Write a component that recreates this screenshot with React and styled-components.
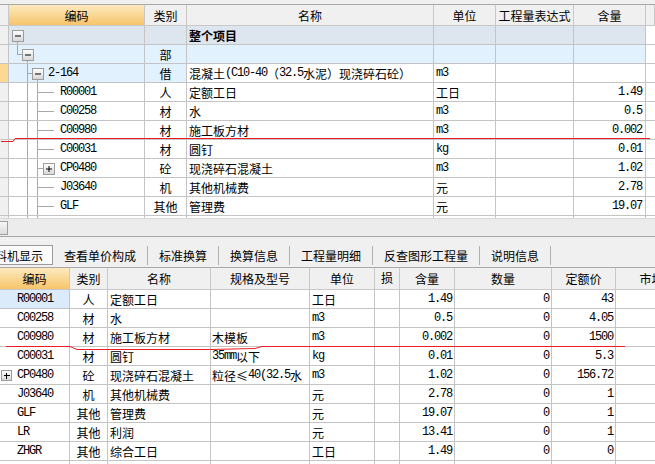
import React from 'react';
import styled, { createGlobalStyle } from 'styled-components';

const GlobalStyle = createGlobalStyle`
  html, body { margin: 0; padding: 0; background: #f0f0f0; }
  body {
    font-family: "Noto Sans CJK SC", "Liberation Sans", sans-serif;
    font-size: 12px;
    color: #000;
  }
`;

const LINE = '#c4c4c4';

const Page = styled.div`
  position: relative;
  width: 655px;
  height: 464px;
  overflow: hidden;
  background: #f0f0f0;
  display: flex;
  flex-direction: column;
`;

const TopGap = styled.div`
  height: 4px;
  flex: none;
`;

const Grid = styled.div`
  flex: none;
  overflow: hidden;
  border-top: ${p => (p.$top ? '1px solid #a8a8a8' : 'none')};
  background: #fff;
`;

const Body = styled.div`
  height: ${p => p.$h}px;
  overflow: hidden;
`;

const Row = styled.div`
  display: grid;
  grid-template-columns: ${p => p.$cols};
  height: ${p => p.$h || 19}px;
  background: ${p => p.$bg || '#fff'};
`;

const Cell = styled.div`
  box-sizing: border-box;
  height: 100%;
  border-right: ${p => (p.$noRight ? 'none' : `1px solid ${LINE}`)};
  border-bottom: 1px solid ${LINE};
  display: flex;
  align-items: center;
  overflow: hidden;
  white-space: nowrap;
  justify-content: ${p =>
    p.$align === 'right' ? 'flex-end' : p.$align === 'center' ? 'center' : 'flex-start'};
  padding: 0 ${p => p.$pr ?? 2}px 0 ${p => p.$pl ?? 2}px;
  background: ${p => p.$bg || 'transparent'};
  font-weight: ${p => (p.$bold ? 700 : 400)};
  position: relative;
`;

const HeadCell = styled(Cell)`
  justify-content: center;
  align-items: ${p => (p.$top ? 'flex-start' : 'center')};
  padding: ${p => (p.$top ? '1px 0 0' : '0')};
  background: ${p =>
    p.$hot ? 'linear-gradient(#fde9bf, #f6c56a)' : p.$bg || '#f0f0f0'};
  border-right: 1px solid #c8c8c8;
  border-bottom: 1px solid #c8c8c8;
`;

const Half = styled.span`
  font-family: "Liberation Mono", monospace;
  font-size: 12px;
  letter-spacing: -1.2px;
`;

const Txt = ({ children }) => {
  if (children == null || children === '') return null;
  const parts = String(children).split(/([\x20-\x7e]+)/).filter(Boolean);
  return (
    <>
      {parts.map((s, i) =>
        /^[\x20-\x7e]+$/.test(s) ? <Half key={i}>{s}</Half> : <span key={i}>{s}</span>
      )}
    </>
  );
};

const HScroll = styled.div`
  flex: none;
  box-sizing: border-box;
  height: 19px;
  border-top: 1px solid #d8d8d8;
  border-bottom: 1px solid #a4a4a4;
  background: #ececec;
  display: flex;
  align-items: center;
`;

const Thumb = styled.div`
  width: 8px;
  height: 14px;
  box-sizing: border-box;
  border: 1px solid #a0a0a0;
  border-left: none;
  background: linear-gradient(#f6f6f6, #dcdcdc);
`;

const TabBar = styled.div`
  flex: none;
  box-sizing: border-box;
  height: 31px;
  padding-top: 9px;
  display: flex;
  align-items: flex-start;
  border-bottom: 1px solid #a8a8a8;
  background: #f0f0f0;
`;

const Tab = styled.div`
  box-sizing: border-box;
  height: 19px;
  display: flex;
  align-items: center;
  white-space: nowrap;
  overflow: hidden;
  ${p =>
    p.$active
      ? `
    width: 53px;
    justify-content: flex-end;
    padding-right: 9px;
    background: #fbfbfb;
    border: 1px solid #9a9a9a;
    border-left: none;
    margin-top: -1px;
    height: 20px;
  `
      : `
    padding: 0 11px;
    border-right: 1px solid #b0b0b0;
  `}
`;

const Overlay = styled.svg`
  position: absolute;
  left: 0;
  top: 0;
  pointer-events: none;
`;

/* ---------- tree drawing ---------- */
const TL = '#a8a8a8';

const ExpBox = ({ x, plus }) => (
  <g>
    <rect x={x + 0.5} y={4.5} width={11} height={11} fill="url(#bx)" stroke="#9c9c9c" />
    <line x1={x + 3} x2={x + 9} y1={10} y2={10} stroke="#000" />
    {plus && <line x1={x + 6} x2={x + 6} y1={7} y2={13} stroke="#000" />}
  </g>
);

const Defs = () => (
  <defs>
    <linearGradient id="bx" x1="0" y1="0" x2="0" y2="1">
      <stop offset="0" stopColor="#ffffff" />
      <stop offset="1" stopColor="#d6d6d6" />
    </linearGradient>
  </defs>
);

const Tree = ({ kind }) => {
  let w = 51;
  let content;
  if (kind === 'root') {
    w = 20;
    content = (
      <>
        <ExpBox x={3} />
        <line x1={8.5} x2={8.5} y1={16} y2={19} stroke={TL} />
      </>
    );
  } else if (kind === 'dept') {
    w = 30;
    content = (
      <>
        <line x1={8.5} x2={8.5} y1={0} y2={10} stroke={TL} />
        <line x1={8.5} x2={13} y1={9.5} y2={9.5} stroke={TL} />
        <ExpBox x={13} />
        <line x1={18.5} x2={18.5} y1={16} y2={19} stroke={TL} />
      </>
    );
  } else if (kind === 'item') {
    w = 39;
    content = (
      <>
        <line x1={18.5} x2={18.5} y1={0} y2={19} stroke={TL} />
        <line x1={18.5} x2={23} y1={9.5} y2={9.5} stroke={TL} />
        <ExpBox x={23} />
        <line x1={28.5} x2={28.5} y1={16} y2={19} stroke={TL} />
      </>
    );
  } else if (kind === 'none') {
    content = (
      <>
        <line x1={18.5} x2={18.5} y1={0} y2={19} stroke={TL} />
        <line x1={28.5} x2={28.5} y1={0} y2={19} stroke={TL} />
      </>
    );
  } else {
    content = (
      <>
        <line x1={18.5} x2={18.5} y1={0} y2={19} stroke={TL} />
        <line x1={28.5} x2={28.5} y1={0} y2={19} stroke={TL} />
        {kind === 'childPlus' ? (
          <>
            <line x1={28.5} x2={34} y1={9.5} y2={9.5} stroke={TL} />
            <ExpBox x={34} plus />
          </>
        ) : (
          <line x1={28.5} x2={45} y1={9.5} y2={9.5} stroke={TL} />
        )}
      </>
    );
  }
  return (
    <svg width={w} height={19} style={{ flex: 'none', alignSelf: 'flex-start' }}>
      <Defs />
      {content}
    </svg>
  );
};

const PlusBox = () => (
  <svg width={12} height={19} style={{ position: 'absolute', left: 0, top: 0 }}>
    <Defs />
    <rect x={1.5} y={4.5} width={10} height={10} fill="url(#bx)" stroke="#9c9c9c" />
    <line x1={4} x2={10} y1={9.5} y2={9.5} stroke="#000" />
    <line x1={6.5} x2={6.5} y1={7} y2={13} stroke="#000" />
  </svg>
);

/* ---------- data ---------- */
const TOP_COLS = '9px 136px 42px 247px 62px 78px 72px 9px';

const topRows = [
  { tree: 'root', bg: '#dde5ef', name: '整个项目', bold: true },
  { tree: 'dept', bg: '#e1f1fd', cat: '部' },
  {
    tree: 'item',
    codeBg: '#e1f1fd',
    catBg: '#e1f1fd',
    ind: '#fcd993',
    code: '2-164',
    cat: '借',
    name: '混凝土(C10-40（32.5水泥）现浇碎石砼）',
    unit: 'm3',
  },
  { tree: 'child', code: 'R00001', cat: '人', name: '定额工日', unit: '工日', qty: '1.49' },
  { tree: 'child', code: 'C00258', cat: '材', name: '水', unit: 'm3', qty: '0.5' },
  { tree: 'child', code: 'C00980', cat: '材', name: '施工板方材', unit: 'm3', qty: '0.002' },
  { tree: 'child', code: 'C00031', cat: '材', name: '圆钉', unit: 'kg', qty: '0.01' },
  { tree: 'childPlus', code: 'CP0480', cat: '砼', name: '现浇碎石混凝土', unit: 'm3', qty: '1.02' },
  { tree: 'child', code: 'J03640', cat: '机', name: '其他机械费', unit: '元', qty: '2.78' },
  { tree: 'child', code: 'GLF', cat: '其他', name: '管理费', unit: '元', qty: '19.07' },
  { tree: 'none' },
];

const BOT_COLS = '70px 38px 103px 99px 65px 25px 55px 97px 64px 72px';

const botRows = [
  { code: 'R00001', cat: '人', name: '定额工日', spec: '', unit: '工日', qty: '1.49', price: '43', sel: true },
  { code: 'C00258', cat: '材', name: '水', spec: '', unit: 'm3', qty: '0.5', price: '4.05' },
  { code: 'C00980', cat: '材', name: '施工板方材', spec: '木模板', unit: 'm3', qty: '0.002', price: '1500' },
  { code: 'C00031', cat: '材', name: '圆钉', spec: '35mm以下', unit: 'kg', qty: '0.01', price: '5.3' },
  { code: 'CP0480', cat: '砼', name: '现浇碎石混凝土', spec: '粒径≤40(32.5水', unit: 'm3', qty: '1.02', price: '156.72', plus: true },
  { code: 'J03640', cat: '机', name: '其他机械费', spec: '', unit: '元', qty: '2.78', price: '1' },
  { code: 'GLF', cat: '其他', name: '管理费', spec: '', unit: '元', qty: '19.07', price: '1' },
  { code: 'LR', cat: '其他', name: '利润', spec: '', unit: '元', qty: '13.41', price: '1' },
  { code: 'ZHGR', cat: '其他', name: '综合工日', spec: '', unit: '工日', qty: '1.49', price: '0' },
  { empty: true },
];

const tabs = ['查看单价构成', '标准换算', '换算信息', '工程量明细', '反查图形工程量', '说明信息'];

export default function App() {
  return (
    <Page>
      <GlobalStyle />
      <TopGap />
      <Grid $top>
        <Row $cols={TOP_COLS} $h={21} $bg="#f0f0f0">
          <HeadCell />
          <HeadCell $hot>编码</HeadCell>
          <HeadCell>类别</HeadCell>
          <HeadCell>名称</HeadCell>
          <HeadCell>单位</HeadCell>
          <HeadCell>工程量表达式</HeadCell>
          <HeadCell>含量</HeadCell>
          <HeadCell $bg="#f0f0f0" />
        </Row>
        <Body $h={192}>
          {topRows.map((r, i) => (
            <Row key={i} $cols={TOP_COLS} $bg={r.bg}>
              <Cell $bg={r.ind || '#f0f0f0'} />
              <Cell $pl={0} $bg={r.codeBg}>
                <Tree kind={r.tree} />
                <Txt>{r.code}</Txt>
              </Cell>
              <Cell $align="center" $pl={0} $pr={0} $bg={r.catBg}>{r.cat}</Cell>
              <Cell $bold={r.bold}>
                <Txt>{r.name}</Txt>
              </Cell>
              <Cell>
                <Txt>{r.unit}</Txt>
              </Cell>
              <Cell />
              <Cell $align="right" $pr={3}>
                <Txt>{r.qty}</Txt>
              </Cell>
              <Cell $noRight $bg="#fff" />
            </Row>
          ))}
        </Body>
      </Grid>
      <HScroll>
        <Thumb />
      </HScroll>
      <TabBar>
        <Tab $active>工料机显示</Tab>
        {tabs.map(t => (
          <Tab key={t}>{t}</Tab>
        ))}
      </TabBar>
      <Grid>
        <Row $cols={BOT_COLS} $h={22} $bg="#f0f0f0">
          <HeadCell $hot>编码</HeadCell>
          <HeadCell>类别</HeadCell>
          <HeadCell>名称</HeadCell>
          <HeadCell>规格及型号</HeadCell>
          <HeadCell>单位</HeadCell>
          <HeadCell $top>损</HeadCell>
          <HeadCell>含量</HeadCell>
          <HeadCell>数量</HeadCell>
          <HeadCell>定额价</HeadCell>
          <HeadCell>市场</HeadCell>
        </Row>
        <Body $h={180}>
          {botRows.map((r, i) => (
            <Row key={i} $cols={BOT_COLS}>
              <Cell $pl={17} $bg={r.sel ? '#dcebfb' : undefined}>
                {r.plus && <PlusBox />}
                <Txt>{r.code}</Txt>
              </Cell>
              <Cell $align="center" $pl={0} $pr={0}>{r.cat}</Cell>
              <Cell>
                <Txt>{r.name}</Txt>
              </Cell>
              <Cell $pl={1}>
                <Txt>{r.spec}</Txt>
              </Cell>
              <Cell>
                <Txt>{r.unit}</Txt>
              </Cell>
              <Cell />
              <Cell $align="right" $pr={2}>
                <Txt>{r.qty}</Txt>
              </Cell>
              <Cell $align="right" $pr={2}>
                <Txt>{r.empty ? '' : '0'}</Txt>
              </Cell>
              <Cell $align="right" $pr={2}>
                <Txt>{r.price}</Txt>
              </Cell>
              <Cell $noRight />
            </Row>
          ))}
        </Body>
      </Grid>
      <Overlay width={655} height={464}>
        <polyline
          points="1,141.5 13,141.5 15,138.5 650,138.5"
          fill="none"
          stroke="#ee1c24"
          strokeWidth={1}
        />
        <polyline
          points="6,346.5 70,346.5 77,349.5 210,349.5 255,348.5 262,346.5 625,346.5"
          fill="none"
          stroke="#ee1c24"
          strokeWidth={1}
        />
      </Overlay>
    </Page>
  );
}
